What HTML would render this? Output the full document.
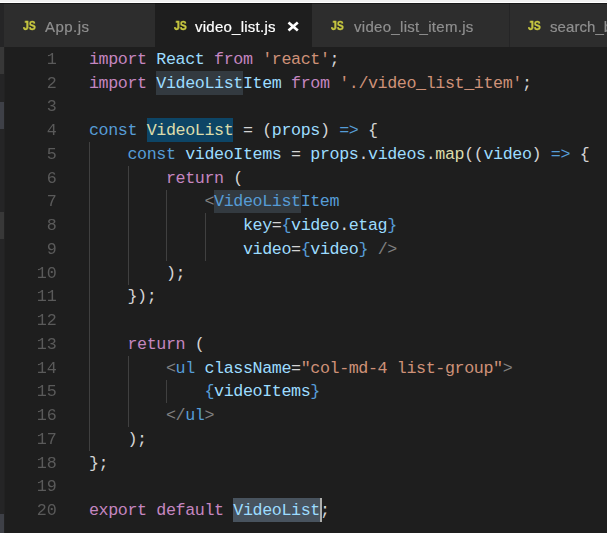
<!DOCTYPE html>
<html><head><meta charset="utf-8"><title>video_list.js</title>
<style>
html,body{margin:0;padding:0;}
body{width:607px;height:533px;overflow:hidden;background:#1e1e1e;position:relative;font-family:"Liberation Sans",sans-serif;}
.abs{position:absolute;}
.topstrip{left:0;top:0;width:607px;height:2px;background:#f0f0f0;border-bottom:1px solid #fff;}
.topline{left:0;top:3px;width:607px;height:1px;background:rgba(0,0,0,0.45);z-index:5;}
.tabs{left:0;top:3px;width:607px;height:44px;background:#252526;}
.tab{position:absolute;top:3px;height:44px;background:#2d2d2d;color:#8f8f8f;font-size:15px;line-height:44px;white-space:nowrap;overflow:hidden;}
.tab.active{background:#1e1e1e;color:#ffffff;}
.js{will-change:transform;position:absolute;top:0.8px;font-size:13px;font-weight:bold;color:#cbcb41;-webkit-text-stroke:0.35px #cbcb41;line-height:44px;transform:scaleX(0.8);transform-origin:0 50%;}
.lbl{position:absolute;top:1.6px;will-change:transform;-webkit-text-stroke:0.2px currentColor;}
.ln{will-change:transform;position:absolute;left:0;width:56.8px;text-align:right;color:#5a5a5a;font-family:"Liberation Mono",monospace;font-size:16.7px;height:23.75px;line-height:23.75px;}
.cl{position:absolute;left:89.0px;white-space:pre;font-family:"Liberation Mono",monospace;font-size:16.7px;letter-spacing:-0.395px;height:23.75px;line-height:23.75px;color:#d4d4d4;}
.g{position:absolute;width:1px;background:#404040;}
.hl{position:absolute;}
.side{position:absolute;left:0;width:4px;}
</style></head><body>
<div class="abs topstrip"></div><div class="abs topline"></div>
<div class="abs tabs"></div>
<div class="side" style="top:3px;height:530px;background:#252526"></div><div class="abs" style="left:4px;top:47px;width:1px;height:486px;background:#222222"></div>
<div class="side" style="top:47px;height:27px;background:#373737"></div>
<div class="side" style="top:102px;height:27px;background:#3e4047"></div>
<div class="side" style="top:212px;height:27px;background:#383838"></div>
<div class="side" style="top:514px;height:19px;background:#3e4047"></div>
<div class="tab" style="left:4px;width:151px"><span class="js" style="left:19px">JS</span><span class="lbl" style="left:41px;letter-spacing:0.45px">App.js</span></div>
<div class="tab active" style="left:155px;width:157px"><span class="js" style="left:18.5px">JS</span><span class="lbl" style="left:40.2px;letter-spacing:0.25px">video_list.js</span><svg class="abs" style="left:132px;top:17.5px" width="13" height="13" viewBox="0 0 13 13"><path d="M1.5 1.6 L10.8 9.6 M10.8 1.6 L1.5 9.6" stroke="#fff" stroke-width="2.7" fill="none"/></svg></div>
<div class="tab" style="left:312px;width:197px"><span class="js" style="left:19px">JS</span><span class="lbl" style="left:41.5px;letter-spacing:0.3px">video_list_item.js</span></div>
<div class="tab" style="left:510px;width:97px"><span class="js" style="left:18px">JS</span><span class="lbl" style="left:40px;letter-spacing:0.07px">search_bar.js</span></div>
<div class="hl" style="left:156.38px;top:70.75px;width:86.62px;height:23.75px;background:#333A40"></div>
<div class="hl" style="left:146.75px;top:118.25px;width:86.62px;height:23.75px;background:#0D4566"></div>
<div class="hl" style="left:214.12px;top:189.50px;width:86.62px;height:23.75px;background:#333A40"></div>
<div class="hl" style="left:233.38px;top:498.25px;width:86.62px;height:23.75px;background:#48535E"></div>
<div class="g" style="left:89.00px;top:142.00px;height:23.75px"></div>
<div class="g" style="left:89.00px;top:165.75px;height:23.75px"></div>
<div class="g" style="left:127.50px;top:165.75px;height:23.75px"></div>
<div class="g" style="left:89.00px;top:189.50px;height:23.75px"></div>
<div class="g" style="left:127.50px;top:189.50px;height:23.75px"></div>
<div class="g" style="left:166.00px;top:189.50px;height:23.75px"></div>
<div class="g" style="left:89.00px;top:213.25px;height:23.75px"></div>
<div class="g" style="left:127.50px;top:213.25px;height:23.75px"></div>
<div class="g" style="left:166.00px;top:213.25px;height:23.75px"></div>
<div class="g" style="left:204.50px;top:213.25px;height:23.75px"></div>
<div class="g" style="left:89.00px;top:237.00px;height:23.75px"></div>
<div class="g" style="left:127.50px;top:237.00px;height:23.75px"></div>
<div class="g" style="left:166.00px;top:237.00px;height:23.75px"></div>
<div class="g" style="left:204.50px;top:237.00px;height:23.75px"></div>
<div class="g" style="left:89.00px;top:260.75px;height:23.75px"></div>
<div class="g" style="left:127.50px;top:260.75px;height:23.75px"></div>
<div class="g" style="left:89.00px;top:284.50px;height:23.75px"></div>
<div class="g" style="left:89.00px;top:308.25px;height:23.75px"></div>
<div class="g" style="left:89.00px;top:332.00px;height:23.75px"></div>
<div class="g" style="left:89.00px;top:355.75px;height:23.75px"></div>
<div class="g" style="left:127.50px;top:355.75px;height:23.75px"></div>
<div class="g" style="left:89.00px;top:379.50px;height:23.75px"></div>
<div class="g" style="left:127.50px;top:379.50px;height:23.75px"></div>
<div class="g" style="left:166.00px;top:379.50px;height:23.75px"></div>
<div class="g" style="left:89.00px;top:403.25px;height:23.75px"></div>
<div class="g" style="left:127.50px;top:403.25px;height:23.75px"></div>
<div class="g" style="left:89.00px;top:427.00px;height:23.75px"></div>
<div class="abs" style="left:320.00px;top:498.25px;width:2px;height:23.75px;background:#aeafad"></div>
<div class="ln" style="top:47.75px">1</div>
<div class="cl" style="top:47.75px"><span style="color:#C586C0">import</span><span style="color:#D4D4D4"> </span><span style="color:#9CDCFE">React</span><span style="color:#D4D4D4"> </span><span style="color:#C586C0">from</span><span style="color:#D4D4D4"> </span><span style="color:#CE9178">'react'</span><span style="color:#D4D4D4">;</span></div>
<div class="ln" style="top:71.50px">2</div>
<div class="cl" style="top:71.50px"><span style="color:#C586C0">import</span><span style="color:#D4D4D4"> </span><span style="color:#9CDCFE">VideoListItem</span><span style="color:#D4D4D4"> </span><span style="color:#C586C0">from</span><span style="color:#D4D4D4"> </span><span style="color:#CE9178">'./video_list_item'</span><span style="color:#D4D4D4">;</span></div>
<div class="ln" style="top:95.25px">3</div>
<div class="ln" style="top:119.00px">4</div>
<div class="cl" style="top:119.00px"><span style="color:#569CD6">const</span><span style="color:#D4D4D4"> </span><span style="color:#DCDCAA">VideoList</span><span style="color:#D4D4D4"> = (</span><span style="color:#9CDCFE">props</span><span style="color:#D4D4D4">) </span><span style="color:#569CD6">=&gt;</span><span style="color:#D4D4D4"> {</span></div>
<div class="ln" style="top:142.75px">5</div>
<div class="cl" style="top:142.75px"><span style="color:#D4D4D4">    </span><span style="color:#569CD6">const</span><span style="color:#D4D4D4"> </span><span style="color:#9CDCFE">videoItems</span><span style="color:#D4D4D4"> = </span><span style="color:#9CDCFE">props</span><span style="color:#D4D4D4">.</span><span style="color:#9CDCFE">videos</span><span style="color:#D4D4D4">.</span><span style="color:#DCDCAA">map</span><span style="color:#D4D4D4">((</span><span style="color:#9CDCFE">video</span><span style="color:#D4D4D4">) </span><span style="color:#569CD6">=&gt;</span><span style="color:#D4D4D4"> {</span></div>
<div class="ln" style="top:166.50px">6</div>
<div class="cl" style="top:166.50px"><span style="color:#D4D4D4">        </span><span style="color:#C586C0">return</span><span style="color:#D4D4D4"> (</span></div>
<div class="ln" style="top:190.25px">7</div>
<div class="cl" style="top:190.25px"><span style="color:#D4D4D4">            </span><span style="color:#808080">&lt;</span><span style="color:#569CD6">VideoListItem</span></div>
<div class="ln" style="top:214.00px">8</div>
<div class="cl" style="top:214.00px"><span style="color:#D4D4D4">                </span><span style="color:#9CDCFE">key</span><span style="color:#D4D4D4">=</span><span style="color:#569CD6">{</span><span style="color:#9CDCFE">video</span><span style="color:#D4D4D4">.</span><span style="color:#9CDCFE">etag</span><span style="color:#569CD6">}</span></div>
<div class="ln" style="top:237.75px">9</div>
<div class="cl" style="top:237.75px"><span style="color:#D4D4D4">                </span><span style="color:#9CDCFE">video</span><span style="color:#D4D4D4">=</span><span style="color:#569CD6">{</span><span style="color:#9CDCFE">video</span><span style="color:#569CD6">}</span><span style="color:#D4D4D4"> </span><span style="color:#808080">/&gt;</span></div>
<div class="ln" style="top:261.50px">10</div>
<div class="cl" style="top:261.50px"><span style="color:#D4D4D4">        );</span></div>
<div class="ln" style="top:285.25px">11</div>
<div class="cl" style="top:285.25px"><span style="color:#D4D4D4">    });</span></div>
<div class="ln" style="top:309.00px">12</div>
<div class="ln" style="top:332.75px">13</div>
<div class="cl" style="top:332.75px"><span style="color:#D4D4D4">    </span><span style="color:#C586C0">return</span><span style="color:#D4D4D4"> (</span></div>
<div class="ln" style="top:356.50px">14</div>
<div class="cl" style="top:356.50px"><span style="color:#D4D4D4">        </span><span style="color:#808080">&lt;</span><span style="color:#569CD6">ul</span><span style="color:#D4D4D4"> </span><span style="color:#9CDCFE">className</span><span style="color:#D4D4D4">=</span><span style="color:#CE9178">"col-md-4 list-group"</span><span style="color:#808080">&gt;</span></div>
<div class="ln" style="top:380.25px">15</div>
<div class="cl" style="top:380.25px"><span style="color:#D4D4D4">            </span><span style="color:#569CD6">{</span><span style="color:#9CDCFE">videoItems</span><span style="color:#569CD6">}</span></div>
<div class="ln" style="top:404.00px">16</div>
<div class="cl" style="top:404.00px"><span style="color:#D4D4D4">        </span><span style="color:#808080">&lt;/</span><span style="color:#569CD6">ul</span><span style="color:#808080">&gt;</span></div>
<div class="ln" style="top:427.75px">17</div>
<div class="cl" style="top:427.75px"><span style="color:#D4D4D4">    );</span></div>
<div class="ln" style="top:451.50px">18</div>
<div class="cl" style="top:451.50px"><span style="color:#D4D4D4">};</span></div>
<div class="ln" style="top:475.25px">19</div>
<div class="ln" style="top:499.00px">20</div>
<div class="cl" style="top:499.00px"><span style="color:#C586C0">export</span><span style="color:#D4D4D4"> </span><span style="color:#C586C0">default</span><span style="color:#D4D4D4"> </span><span style="color:#9CDCFE">VideoList</span><span style="color:#D4D4D4">;</span></div>
</body></html>
